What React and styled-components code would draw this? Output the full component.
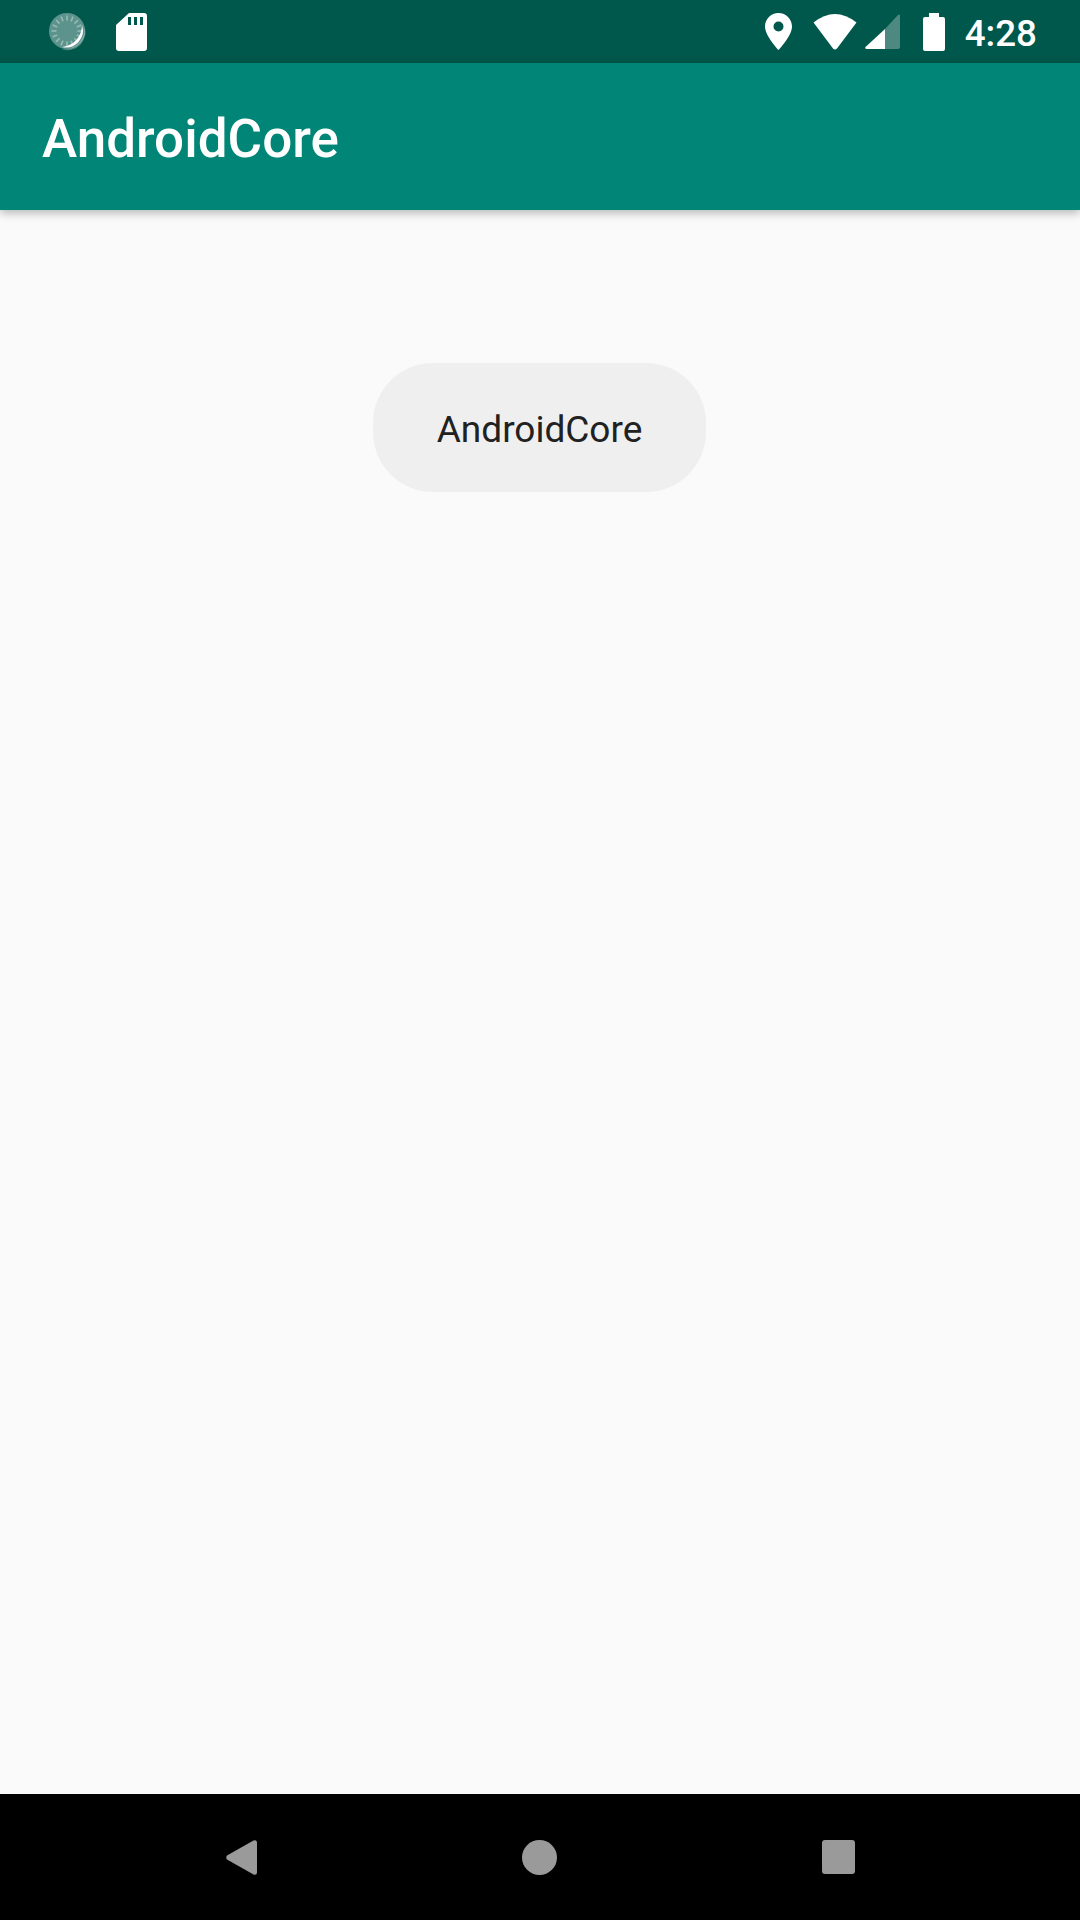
import React from 'react'
import styled, { createGlobalStyle } from 'styled-components'

const GlobalStyle = createGlobalStyle`
  html, body {
    margin: 0;
    padding: 0;
    background: #fafafa;
  }
  * {
    box-sizing: border-box;
  }
`

const Screen = styled.div`
  display: flex;
  flex-direction: column;
  width: 1080px;
  height: 1920px;
  overflow: hidden;
  background: #fafafa;
  font-family: Roboto, "Noto Sans", sans-serif;
`

const StatusBar = styled.div`
  display: flex;
  align-items: center;
  justify-content: space-between;
  flex: none;
  height: 63px;
  padding: 0 43px 0 49px;
  background: #00574b;
`

const StatusGroup = styled.div`
  display: flex;
  align-items: center;
`

const Slot = styled.span`
  display: flex;
  margin-left: ${(p) => p.$left || 0}px;
`

const Clock = styled.span`
  margin-left: 20px;
  padding-top: 4px;
  color: #fff;
  font-size: 36.75px;
  font-weight: 500;
  line-height: 42px;
`

const AppBar = styled.header`
  position: relative;
  z-index: 1;
  display: flex;
  align-items: center;
  flex: none;
  height: 147px;
  padding: 5px 0 0 42px;
  background: #008577;
  box-shadow: 0 3px 9px rgba(0, 0, 0, 0.28);
`

const Title = styled.h1`
  margin: 0;
  color: #fff;
  font-size: 53px;
  font-weight: 500;
  line-height: 1;
`

const Content = styled.main`
  display: flex;
  flex: 1;
  flex-direction: column;
  align-items: center;
  padding: 153px 1px 0 0;
`

const Chip = styled.button`
  width: 333px;
  height: 129px;
  padding: 3px 0 0;
  border: 0;
  border-radius: 60px;
  background: #efefef;
  color: #212121;
  font-family: inherit;
  font-size: 37px;
  font-weight: 400;
`

const NavBar = styled.nav`
  display: flex;
  align-items: center;
  justify-content: center;
  flex: none;
  gap: 265px;
  height: 126px;
  background: #000;
`

const ticks = Array.from({ length: 16 }, (_, i) => (i * 360) / 16)

function SpinnerIcon() {
  return (
    <svg width="38" height="38" viewBox="0 0 38 38">
      <circle cx="18" cy="18" r="18" fill="#fff" fillOpacity="0.36" />
      {ticks.map((deg) => (
        <rect key={deg} x="17.2" y="2.5" width="1.7" height="5" fill="#fff" fillOpacity="0.35" transform={`rotate(${deg} 18 18)`} />
      ))}
      <path d="M35 12A18 18 0 0 1 12 36A20 20 0 0 0 35 12Z" fill="#fff" fillOpacity="0.3" />
      <path d="M33 12A17 17 0 0 1 13 34A22 22 0 0 0 33 12Z" fill="#fff" />
    </svg>
  )
}

function SdCardIcon() {
  return (
    <svg width="31" height="38" viewBox="0 0 31 38">
      <path
        fillRule="evenodd"
        fill="#fff"
        d="M13 0H28Q31 0 31 3V35Q31 38 28 38H3Q0 38 0 35V12ZM12 4V12H15V4ZM18 4V12H21V4ZM24 4V12H27V4Z"
      />
    </svg>
  )
}

function PinIcon() {
  return (
    <svg width="27" height="37" viewBox="0 0 27 37">
      <path
        fillRule="evenodd"
        fill="#fff"
        d="M13.5 0C6 0 0 6 0 13.5C0 23 13.5 37 13.5 37S27 23 27 13.5C27 6 21 0 13.5 0ZM13.5 8.5A5 5 0 1 1 13.5 18.5A5 5 0 1 1 13.5 8.5Z"
      />
    </svg>
  )
}

function WifiIcon() {
  return (
    <svg width="44" height="36" viewBox="0 0 44 36">
      <path fill="#fff" d="M0.5 8.5Q22 -8.5 43.5 8.5L24 34.5Q22 36.5 20 34.5Z" />
    </svg>
  )
}

function SignalIcon() {
  return (
    <svg width="35" height="35" viewBox="0 0 35 35">
      <path fill="#fff" fillOpacity="0.3" d="M20 15L33 1Q35 -0.5 35 2V33Q35 35 33 35H20Z" />
      <path fill="#fff" d="M0.5 33L20 15V35H2Q-0.5 35 0.5 33Z" />
    </svg>
  )
}

function BatteryIcon() {
  return (
    <svg width="22" height="38" viewBox="0 0 22 38">
      <path fill="#fff" d="M6 0H16V4H20Q22 4 22 6V36Q22 38 20 38H2Q0 38 0 36V6Q0 4 2 4H6Z" />
    </svg>
  )
}

function BackIcon() {
  return (
    <svg width="31" height="35" viewBox="0 0 31 35">
      <path fill="#9a9a9a" d="M1 19.5Q-0.5 17.5 1 15.5L27.5 0.5Q31 -0.5 31 3V32Q31 35.5 27.5 34.5Z" />
    </svg>
  )
}

function HomeIcon() {
  return (
    <svg width="35" height="35" viewBox="0 0 35 35">
      <circle cx="17.5" cy="17.5" r="17.5" fill="#9a9a9a" />
    </svg>
  )
}

function RecentsIcon() {
  return (
    <svg width="33" height="34" viewBox="0 0 33 34">
      <rect width="33" height="34" rx="3" fill="#9a9a9a" />
    </svg>
  )
}

export default function App() {
  return (
    <Screen>
      <GlobalStyle />
      <StatusBar>
        <StatusGroup>
          <Slot><SpinnerIcon /></Slot>
          <Slot $left={29}><SdCardIcon /></Slot>
        </StatusGroup>
        <StatusGroup>
          <Slot><PinIcon /></Slot>
          <Slot $left={21}><WifiIcon /></Slot>
          <Slot $left={8}><SignalIcon /></Slot>
          <Slot $left={23}><BatteryIcon /></Slot>
          <Clock>4:28</Clock>
        </StatusGroup>
      </StatusBar>
      <AppBar>
        <Title>AndroidCore</Title>
      </AppBar>
      <Content>
        <Chip>AndroidCore</Chip>
      </Content>
      <NavBar>
        <BackIcon />
        <HomeIcon />
        <RecentsIcon />
      </NavBar>
    </Screen>
  )
}
